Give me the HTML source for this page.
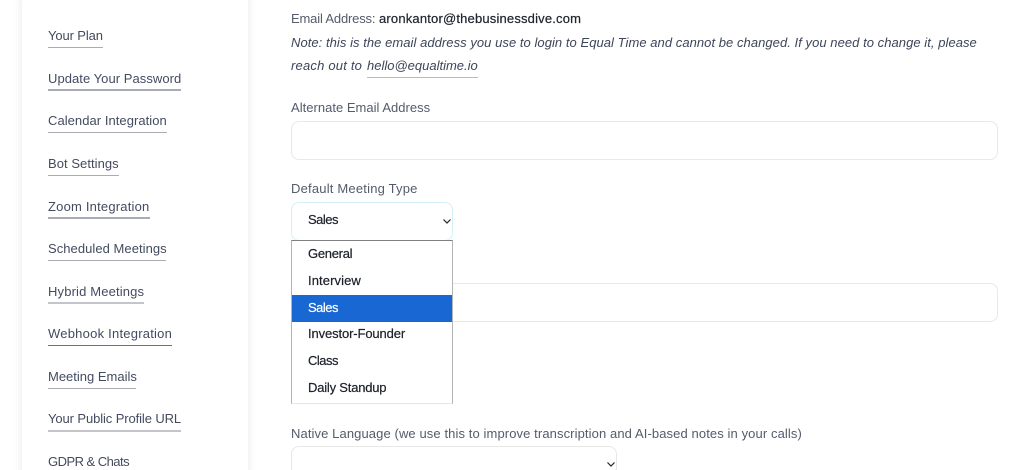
<!DOCTYPE html>
<html style="overflow:hidden;width:1020px;height:470px"><head><meta charset="utf-8">
<style>
html,body{margin:0;padding:0;background:#fff}
body{width:1020px;height:470px;overflow:hidden;position:relative;font-family:"Liberation Sans",sans-serif;color:#3d4559}
#w{position:absolute;left:0;top:0;width:1020px;height:470px;overflow:hidden}
.card{position:absolute;left:22px;top:-12px;width:226px;height:500px;background:#fff;border-radius:9px;box-shadow:0 0 10px rgba(0,0,0,.09)}
.t{position:absolute;white-space:nowrap;font-size:13px;line-height:16px}
.n{left:48px;color:#444b60}
.u{position:absolute;left:48px;height:1px;background:#a9abb5}
.box{position:absolute;box-sizing:border-box;background:#fff;border:1px solid #e8e8e8;border-radius:8px}
.o{position:absolute;left:308px;font-size:13px;line-height:16px;color:#1c2029;white-space:nowrap;-webkit-text-stroke:.2px #1c2029}
</style></head><body><div id="w">
<div class="card"></div>
<div class="t n" style="top:28px;letter-spacing:-.12px">Your Plan</div><div class="u" style="top:47px;width:55px"></div>
<div class="t n" style="top:71px;letter-spacing:.05px">Update Your Password</div><div class="u" style="top:89px;width:133px;height:2px"></div>
<div class="t n" style="top:113px;letter-spacing:.05px">Calendar Integration</div><div class="u" style="top:132px;width:119px"></div>
<div class="t n" style="top:156px;letter-spacing:.05px">Bot Settings</div><div class="u" style="top:175px;width:71px"></div>
<div class="t n" style="top:199px;letter-spacing:.2px">Zoom Integration</div><div class="u" style="top:217px;width:102px;height:2px"></div>
<div class="t n" style="top:241px;letter-spacing:.05px">Scheduled Meetings</div><div class="u" style="top:260px;width:118px"></div>
<div class="t n" style="top:284px;letter-spacing:.15px">Hybrid Meetings</div><div class="u" style="top:302px;width:96px;height:2px;background:#c4c5cb"></div>
<div class="t n" style="top:326px;letter-spacing:.23px">Webhook Integration</div><div class="u" style="top:345px;width:124px;background:#6b7080"></div>
<div class="t n" style="top:369px;letter-spacing:0">Meeting Emails</div><div class="u" style="top:388px;width:88px"></div>
<div class="t n" style="top:411px;letter-spacing:-.1px">Your Public Profile URL</div><div class="u" style="top:430px;width:133px;height:2px;background:#c4c5cb"></div>
<div class="t n" style="top:454px;letter-spacing:-.53px">GDPR &amp; Chats</div>

<div class="t" style="left:291px;top:11px;letter-spacing:-.17px;color:#555b6b">Email Address:</div>
<div class="t" style="left:379px;top:11px;letter-spacing:.18px;color:#20242e;-webkit-text-stroke:.2px #20242e">aronkantor@thebusinessdive.com</div>
<div class="t" style="left:291px;top:35px;font-style:italic;letter-spacing:.05px">Note: this is the email address you use to login to Equal Time and cannot be changed. If you need to change it, please</div>
<div class="t" style="left:291px;top:58px;font-style:italic;letter-spacing:.2px">reach out to</div>
<div class="t" style="left:367px;top:58px;font-style:italic;letter-spacing:0">hello@equaltime.io</div>
<div class="u" style="left:367px;top:77px;width:111px;background:#bbb"></div>

<div class="t" style="left:291px;top:100px;letter-spacing:.02px;color:#555b6b">Alternate Email Address</div>
<div class="box" style="left:291px;top:121px;width:707px;height:39px"></div>

<div class="t" style="left:291px;top:181px;letter-spacing:.2px;color:#555b6b">Default Meeting Type</div>
<div class="box" style="left:291px;top:202px;width:162px;height:39px;border-color:#d3f0f5"></div>
<div class="o" style="top:212px;letter-spacing:-.5px">Sales</div>
<svg style="position:absolute;left:442px;top:218px" width="10" height="7" viewBox="0 0 10 7"><path d="M1.500 1.500 5 5 8.500 1.500" fill="none" stroke="#222" stroke-width="1.200"/></svg>

<div class="box" style="left:291px;top:283px;width:707px;height:39px"></div>

<div style="position:absolute;left:291px;top:240px;width:162px;height:164px;box-sizing:border-box;background:#fff;border:1px solid #b4b4b4;border-top-color:#808080;border-bottom-color:#e6e6e6"></div>
<div style="position:absolute;left:292px;top:295px;width:160px;height:27px;background:#1967d2"></div>
<div class="o" style="top:246px;letter-spacing:-.28px">General</div>
<div class="o" style="top:273px;letter-spacing:.1px">Interview</div>
<div class="o" style="top:300px;color:#fff;-webkit-text-stroke:.2px #fff;letter-spacing:-.5px">Sales</div>
<div class="o" style="top:326px;letter-spacing:-.12px">Investor-Founder</div>
<div class="o" style="top:353px;letter-spacing:-.5px">Class</div>
<div class="o" style="top:380px;letter-spacing:-.2px">Daily Standup</div>

<div class="t" style="left:291px;top:426px;letter-spacing:.1px;color:#555b6b">Native Language (we use this to improve transcription and AI-based notes in your calls)</div>
<div class="box" style="left:291px;top:446px;width:326px;height:39px"></div>
<svg style="position:absolute;left:606px;top:461px" width="10" height="7" viewBox="0 0 10 7"><path d="M1.500 1.500 5 5 8.500 1.500" fill="none" stroke="#222" stroke-width="1.200"/></svg>
</div></body></html>
